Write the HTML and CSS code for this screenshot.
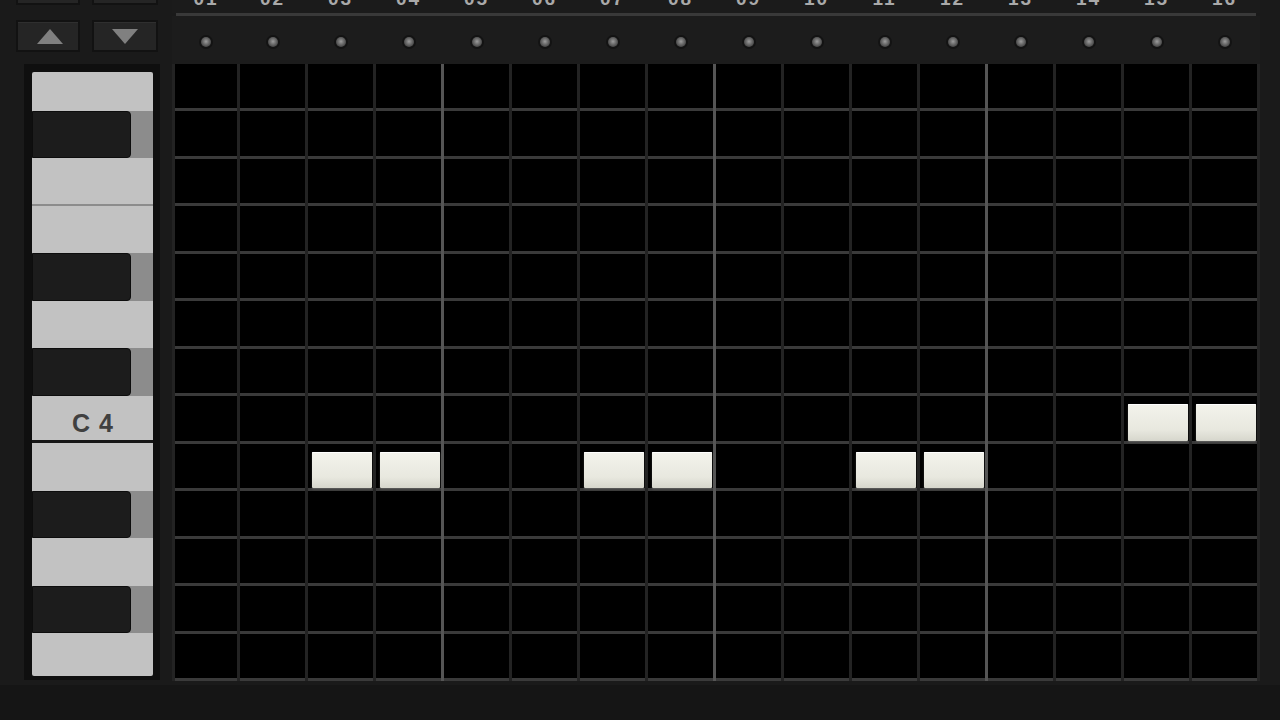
FILE: index.html
```html
<!DOCTYPE html>
<html>
<head>
<meta charset="utf-8">
<link rel="stylesheet" href="styles.css">
</head>
<body>
<div class="app">
  <aside class="side">
    <div class="btn-row top">
      <div class="btn"></div>
      <div class="btn wide"></div>
    </div>
    <div class="btn-row">
      <div class="btn"><span class="tri up"></span></div>
      <div class="btn wide"><span class="tri down"></span></div>
    </div>
    <div class="piano">
      <div class="keys">
        <div class="track">
          <div class="key w"></div>
          <div class="key b"><span class="bk"></span></div>
          <div class="key w ef"></div>
          <div class="key w"></div>
          <div class="key b"><span class="bk"></span></div>
          <div class="key w"></div>
          <div class="key b"><span class="bk"></span></div>
          <div class="key w bc"><span class="label">C4</span></div>
          <div class="key w"></div>
          <div class="key b"><span class="bk"></span></div>
          <div class="key w"></div>
          <div class="key b"><span class="bk"></span></div>
          <div class="key w"></div>
        </div>
      </div>
    </div>
  </aside>
  <main class="roll">
    <div class="nums">
      <span>01</span><span>02</span><span>03</span><span>04</span><span>05</span><span>06</span><span>07</span><span>08</span><span>09</span><span>10</span><span>11</span><span>12</span><span>13</span><span>14</span><span>15</span><span>16</span>
    </div>
    <div class="rule"></div>
    <div class="dots">
      <span class="dot"></span><span class="dot"></span><span class="dot"></span><span class="dot"></span><span class="dot"></span><span class="dot"></span><span class="dot"></span><span class="dot"></span><span class="dot"></span><span class="dot"></span><span class="dot"></span><span class="dot"></span><span class="dot"></span><span class="dot"></span><span class="dot"></span><span class="dot"></span>
    </div>
    <div class="grid">
      <!-- row 1 G4 -->
      <div class="c"></div><div class="c"></div><div class="c"></div><div class="c"></div><div class="c"></div><div class="c"></div><div class="c"></div><div class="c"></div><div class="c"></div><div class="c"></div><div class="c"></div><div class="c"></div><div class="c"></div><div class="c"></div><div class="c"></div><div class="c"></div>
      <!-- row 2 F#4 -->
      <div class="c"></div><div class="c"></div><div class="c"></div><div class="c"></div><div class="c"></div><div class="c"></div><div class="c"></div><div class="c"></div><div class="c"></div><div class="c"></div><div class="c"></div><div class="c"></div><div class="c"></div><div class="c"></div><div class="c"></div><div class="c"></div>
      <!-- row 3 F4 -->
      <div class="c"></div><div class="c"></div><div class="c"></div><div class="c"></div><div class="c"></div><div class="c"></div><div class="c"></div><div class="c"></div><div class="c"></div><div class="c"></div><div class="c"></div><div class="c"></div><div class="c"></div><div class="c"></div><div class="c"></div><div class="c"></div>
      <!-- row 4 E4 -->
      <div class="c"></div><div class="c"></div><div class="c"></div><div class="c"></div><div class="c"></div><div class="c"></div><div class="c"></div><div class="c"></div><div class="c"></div><div class="c"></div><div class="c"></div><div class="c"></div><div class="c"></div><div class="c"></div><div class="c"></div><div class="c"></div>
      <!-- row 5 D#4 -->
      <div class="c"></div><div class="c"></div><div class="c"></div><div class="c"></div><div class="c"></div><div class="c"></div><div class="c"></div><div class="c"></div><div class="c"></div><div class="c"></div><div class="c"></div><div class="c"></div><div class="c"></div><div class="c"></div><div class="c"></div><div class="c"></div>
      <!-- row 6 D4 -->
      <div class="c"></div><div class="c"></div><div class="c"></div><div class="c"></div><div class="c"></div><div class="c"></div><div class="c"></div><div class="c"></div><div class="c"></div><div class="c"></div><div class="c"></div><div class="c"></div><div class="c"></div><div class="c"></div><div class="c"></div><div class="c"></div>
      <!-- row 7 C#4 -->
      <div class="c"></div><div class="c"></div><div class="c"></div><div class="c"></div><div class="c"></div><div class="c"></div><div class="c"></div><div class="c"></div><div class="c"></div><div class="c"></div><div class="c"></div><div class="c"></div><div class="c"></div><div class="c"></div><div class="c"></div><div class="c"></div>
      <!-- row 8 C4 -->
      <div class="c"></div><div class="c"></div><div class="c"></div><div class="c"></div><div class="c"></div><div class="c"></div><div class="c"></div><div class="c"></div><div class="c"></div><div class="c"></div><div class="c"></div><div class="c"></div><div class="c"></div><div class="c"></div><div class="c"><div class="note"></div></div><div class="c"><div class="note"></div></div>
      <!-- row 9 B3 -->
      <div class="c"></div><div class="c"></div><div class="c"><div class="note"></div></div><div class="c"><div class="note"></div></div><div class="c"></div><div class="c"></div><div class="c"><div class="note"></div></div><div class="c"><div class="note"></div></div><div class="c"></div><div class="c"></div><div class="c"><div class="note"></div></div><div class="c"><div class="note"></div></div><div class="c"></div><div class="c"></div><div class="c"></div><div class="c"></div>
      <!-- row 10 A#3 -->
      <div class="c"></div><div class="c"></div><div class="c"></div><div class="c"></div><div class="c"></div><div class="c"></div><div class="c"></div><div class="c"></div><div class="c"></div><div class="c"></div><div class="c"></div><div class="c"></div><div class="c"></div><div class="c"></div><div class="c"></div><div class="c"></div>
      <!-- row 11 A3 -->
      <div class="c"></div><div class="c"></div><div class="c"></div><div class="c"></div><div class="c"></div><div class="c"></div><div class="c"></div><div class="c"></div><div class="c"></div><div class="c"></div><div class="c"></div><div class="c"></div><div class="c"></div><div class="c"></div><div class="c"></div><div class="c"></div>
      <!-- row 12 G#3 -->
      <div class="c"></div><div class="c"></div><div class="c"></div><div class="c"></div><div class="c"></div><div class="c"></div><div class="c"></div><div class="c"></div><div class="c"></div><div class="c"></div><div class="c"></div><div class="c"></div><div class="c"></div><div class="c"></div><div class="c"></div><div class="c"></div>
      <!-- row 13 G3 -->
      <div class="c"></div><div class="c"></div><div class="c"></div><div class="c"></div><div class="c"></div><div class="c"></div><div class="c"></div><div class="c"></div><div class="c"></div><div class="c"></div><div class="c"></div><div class="c"></div><div class="c"></div><div class="c"></div><div class="c"></div><div class="c"></div>
    </div>
  </main>
</div>
</body>
</html>
```

FILE: styles.css
```css
html, body {
  margin: 0;
  padding: 0;
  background: #151515;
  overflow: hidden;
  width: 1280px;
  height: 720px;
}

.app {
  display: grid;
  grid-template-columns: 172px 1108px;
  margin-top: -14px;
  height: 699px;
  background: #1a1a1a;
  font-family: "Liberation Sans", Arial, sans-serif;
}

/* ---------- left side ---------- */
.side {
  padding-left: 16px;
  display: flex;
  flex-direction: column;
}

.btn-row {
  display: flex;
  gap: 12px;
  height: 32px;
}

.btn-row.top {
  height: 19px;
  margin-bottom: 15px;
}

.btn {
  width: 64px;
  box-sizing: border-box;
  background: #252525;
  border: 2px solid #121212;
  box-shadow: inset 0 1px 0 #2f2f2f;
  display: flex;
  align-items: center;
  justify-content: center;
}

.btn.wide {
  width: 66px;
}

.tri {
  width: 0;
  height: 0;
  border-left: 13px solid transparent;
  border-right: 13px solid transparent;
}

.tri.up {
  border-bottom: 15px solid #808080;
  margin-left: 3px;
}

.tri.down {
  border-top: 15px solid #808080;
}

.piano {
  margin-top: 12px;
  margin-left: 8px;
  width: 136px;
  height: 616px;
  box-sizing: border-box;
  padding: 8px 7px 4px 8px;
  background: #0f0f0f;
}

.keys {
  height: 604px;
  overflow: hidden;
  border-radius: 2px;
}

.track {
  margin-top: -9px;
}

.key {
  height: 47.5px;
  box-sizing: border-box;
  display: flex;
}

.key.w {
  background: #c2c2c2;
}

.key.ef {
  border-bottom: 2px solid #8c8c8c;
}

.key.bc {
  border-bottom: 3px solid #161616;
  align-items: center;
  justify-content: center;
  padding-top: 10px;
}

.key.b {
  background: #8c8c8c;
}

.bk {
  width: 99px;
  height: 100%;
  box-sizing: border-box;
  background: #1c1c1c;
  border: 1px solid #0d0d0d;
  border-radius: 0 4px 4px 0;
}

.label {
  font-weight: bold;
  font-size: 25px;
  letter-spacing: 9px;
  padding-left: 9px;
  color: #404040;
  line-height: 24px;
}

/* ---------- roll ---------- */
.roll {
  display: flex;
  flex-direction: column;
}

.nums,
.dots,
.grid {
  display: grid;
  grid-template-columns: 62px repeat(15, 65px);
  column-gap: 3px;
  padding-left: 3px;
  padding-right: 3px;
  width: 1088px;
  box-sizing: border-box;
}

.nums {
  height: 27px;
  align-items: end;
  padding-bottom: 4px;
  background: #1b1b1b;
}

.nums span {
  text-align: center;
  font-weight: bold;
  font-size: 19px;
  line-height: 20px;
  letter-spacing: 2px;
  color: #a9a9a9;
}

.rule {
  margin-left: 4px;
  width: 1080px;
  height: 3px;
  background: #393939;
}

.dots {
  height: 47.5px;
  padding-top: 20.5px;
  background: #1c1c1c;
  justify-items: center;
  align-items: start;
}

.dot {
  width: 10px;
  height: 10px;
  border-radius: 50%;
  background: radial-gradient(circle at 50% 45%, #9c9c9c 0%, #707070 35%, #3c3c3c 80%, #2a2a2a 100%);
  box-shadow: 0 0 0 2px #131313;
}

.grid {
  grid-auto-rows: 47.5px;
  background: #232323;
}

.c {
  background: #000;
  border-bottom: 3px solid #3a3a3a;
  box-sizing: border-box;
  padding: 8px 1.5px 0 3.5px;
}

.c:nth-child(16n+4),
.c:nth-child(16n+8),
.c:nth-child(16n+12) {
  box-shadow: 3px 0 0 #555;
}

.note {
  height: 100%;
  background: linear-gradient(#f3f3ec, #e8e8df 70%, #d6d6cc);
  box-shadow: inset 0 1px 0 #fff, 0 1px 2px rgba(220, 220, 210, 0.25);
  border-radius: 1px;
}
```
